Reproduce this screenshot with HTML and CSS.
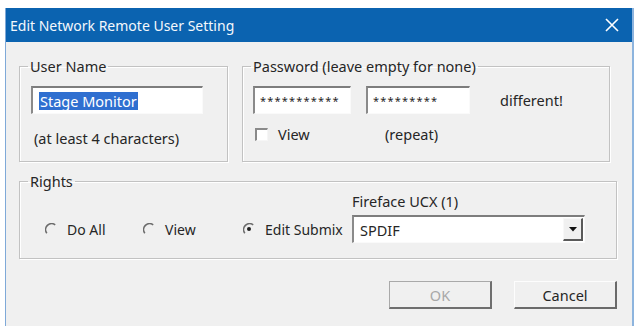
FILE: index.html
```html
<!DOCTYPE html>
<html lang="en">
<head>
    <meta charset="UTF-8">
    <title>Edit Network Remote User Setting</title>
    <link rel="stylesheet" href="styles.css">
</head>
<body>
    <div class="window">
        <div class="titlebar">
            <span class="title">Edit Network Remote User Setting</span>
            <svg class="close" width="14" height="14" viewBox="0 0 14 14">
                <path d="M1 1 L13 13 M13 1 L1 13" stroke="#fff" stroke-width="1.6" fill="none"/>
            </svg>
        </div>
        <div class="content">
            <div class="top-row">
                <fieldset class="group group-user">
                    <legend>User Name</legend>
                    <div class="group-body">
                        <div class="edit edit-name"><span class="selected">Stage Monitor</span></div>
                        <div class="hint">(at least 4 characters)</div>
                    </div>
                </fieldset>
                <fieldset class="group group-pass">
                    <legend>Password (leave empty for none)</legend>
                    <div class="group-body pass-grid">
                        <div class="edit edit-pass1">***********</div>
                        <div class="edit edit-pass2">*********</div>
                        <div class="different">different!</div>
                        <label class="check">
                            <span class="checkbox"></span>
                            <span>View</span>
                        </label>
                        <div class="repeat">(repeat)</div>
                    </div>
                </fieldset>
            </div>
            <fieldset class="group group-rights">
                <legend>Rights</legend>
                <div class="group-body rights-grid">
                    <div class="device">Fireface UCX (1)</div>
                    <label class="radio">
                        <svg width="12" height="12" viewBox="0 0 12 12">
                            <path d="M10.2 1.8 A6 6 0 0 0 1.8 10.2" stroke="#6b6b6b" stroke-width="1.6" fill="none"/>
                        </svg>
                        <span>Do All</span>
                    </label>
                    <label class="radio">
                        <svg width="12" height="12" viewBox="0 0 12 12">
                            <path d="M10.2 1.8 A6 6 0 0 0 1.8 10.2" stroke="#6b6b6b" stroke-width="1.6" fill="none"/>
                        </svg>
                        <span>View</span>
                    </label>
                    <label class="radio">
                        <svg width="12" height="12" viewBox="0 0 12 12">
                            <path d="M10.2 1.8 A6 6 0 0 0 1.8 10.2" stroke="#6b6b6b" stroke-width="1.6" fill="none"/>
                            <circle cx="6" cy="6" r="2" fill="#222"/>
                        </svg>
                        <span>Edit Submix</span>
                    </label>
                    <div class="combo">
                        <span class="combo-text">SPDIF</span>
                        <span class="combo-btn">
                            <svg width="8" height="5" viewBox="0 0 8 5"><path d="M0 0 H8 L4 4.5 Z" fill="#111"/></svg>
                        </span>
                    </div>
                </div>
            </fieldset>
            <div class="buttons">
                <button class="btn btn-ok" disabled>OK</button>
                <button class="btn">Cancel</button>
            </div>
        </div>
    </div>
</body>
</html>
```

FILE: styles.css
```css
body {
    margin: 0;
    background: #fff;
    font-family: "Noto Sans", "Open Sans", sans-serif;
    font-size: 14.5px;
    color: #262626;
}
.window {
    margin: 8px 0 0 5px;
    width: 629px;
    height: 318px;
    box-sizing: border-box;
    border-left: 1px solid #7fa9d8;
    border-right: 2px solid #8db4de;
    background: #f0f0f0;
}
.titlebar {
    height: 34px;
    background: #0b63b0;
    display: flex;
    align-items: center;
    justify-content: space-between;
    padding: 0 13px 0 4px;
}
.title {
    color: #f4f8fc;
    font-size: 14px;
}
.content {
    padding: 14px 15px 0 13px;
}
.top-row {
    display: flex;
    gap: 14px;
}
.group {
    margin: 0;
    padding: 0;
    min-width: 0;
    border: 1px solid #c2c2c2;
    box-shadow: inset 1px 1px #fff, 1px 1px #fff;
}
.group legend {
    margin-left: 8px;
    padding: 0 2px;
    line-height: 20px;
}
.group-user {
    width: 209px;
    box-sizing: border-box;
}
.group-user .group-body {
    padding: 10px 11px 13px 11px;
}
.group-pass {
    width: 368px;
    box-sizing: border-box;
}
.edit {
    height: 28px;
    box-sizing: border-box;
    background: #fff;
    border-style: solid;
    border-width: 2px 1px 1px 2px;
    border-color: #7d7d7d #fafafa #fafafa #8a8a8a;
    display: flex;
    align-items: center;
    padding-left: 6px;
    white-space: nowrap;
}
.edit-name {
    width: 172px;
}
.selected {
    background: #2f6fd0;
    color: #fff;
    padding: 0 1px;
    line-height: 18px;
}
.hint {
    margin-top: 14px;
    line-height: 20px;
    padding-left: 3px;
}
.pass-grid {
    display: grid;
    grid-template-columns: 98px 104px auto;
    column-gap: 15px;
    row-gap: 10px;
    align-items: center;
    padding: 10px 10px 16px 10px;
}
.edit-pass1, .edit-pass2 {
    font-size: 11px;
    letter-spacing: 1.2px;
    padding-left: 5px;
}
.different {
    padding-left: 15px;
}
.check {
    display: flex;
    align-items: center;
    gap: 10px;
    line-height: 20px;
    padding-left: 2px;
}
.checkbox {
    width: 13px;
    height: 13px;
    box-sizing: border-box;
    background: #fff;
    border-style: solid;
    border-width: 2px 1px 1px 2px;
    border-color: #8a8a8a #f6f6f6 #f6f6f6 #8a8a8a;
}
.repeat {
    line-height: 20px;
    padding-left: 19px;
}
.group-rights {
    margin-top: 9px;
}
.rights-grid {
    display: grid;
    grid-template-columns: 98px 100px 109px 233px;
    row-gap: 4px;
    align-items: center;
    padding: 0 0 15px 25px;
}
.device {
    grid-column: 4;
    line-height: 20px;
}
.radio {
    display: flex;
    align-items: center;
    gap: 10px;
    font-size: 14px;
    white-space: nowrap;
}
.combo {
    height: 28px;
    box-sizing: border-box;
    background: #fff;
    border-style: solid;
    border-width: 2px 1px 1px 2px;
    border-color: #7d7d7d #fafafa #fafafa #8a8a8a;
    display: flex;
    align-items: center;
    justify-content: space-between;
    padding: 0 1px 0 6px;
}
.combo-btn {
    width: 20px;
    height: 23px;
    box-sizing: border-box;
    background: #f0f0f0;
    border-style: solid;
    border-width: 1px 2px 2px 1px;
    border-color: #f8f8f8 #5a5a5a #5a5a5a #f8f8f8;
    display: flex;
    align-items: center;
    justify-content: center;
}
.buttons {
    display: flex;
    justify-content: flex-end;
    gap: 22px;
    margin-top: 22px;
}
.btn {
    width: 103px;
    height: 28px;
    font-family: inherit;
    font-size: 14.5px;
    color: #262626;
    background: #f0f0f0;
    border-style: solid;
    border-width: 1px 2px 2px 1px;
    border-color: #fdfdfd #6a6a6a #6a6a6a #fdfdfd;
    padding: 0;
}
.btn-ok {
    color: #a8a8a8;
    border-color: #a9a9a9 #6f6f6f #6f6f6f #a9a9a9;
}
```
